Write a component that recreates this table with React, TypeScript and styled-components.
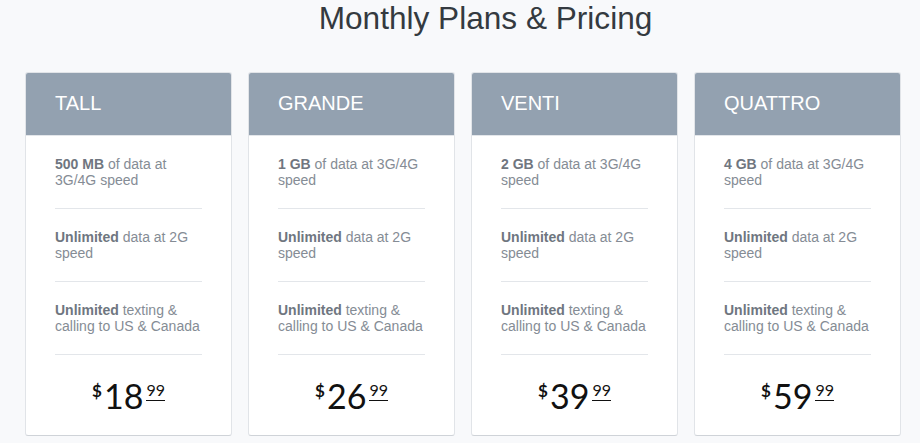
import React from "react";
import styled, { createGlobalStyle } from "styled-components";

type Plan = {
  name: string;
  data: string;
  dataTail: string;
  dollars: string;
  cents: string;
};

const plans: Plan[] = [
  { name: "TALL", data: "500 MB", dataTail: "of data at 3G/4G speed", dollars: "18", cents: "99" },
  { name: "GRANDE", data: "1 GB", dataTail: "of data at 3G/4G speed", dollars: "26", cents: "99" },
  { name: "VENTI", data: "2 GB", dataTail: "of data at 3G/4G speed", dollars: "39", cents: "99" },
  { name: "QUATTRO", data: "4 GB", dataTail: "of data at 3G/4G speed", dollars: "59", cents: "99" },
];

const GlobalStyle = createGlobalStyle`
  html, body {
    margin: 0;
    padding: 0;
    background: #f8f9fb;
    font-family: "Liberation Sans", Arial, sans-serif;
  }
`;

export default function App() {
  return (
    <>
      <GlobalStyle />
      <Page>
        <Title>Monthly Plans &amp; Pricing</Title>
        <Grid>
          {plans.map((p) => (
            <Card key={p.name}>
              <CardHeader>{p.name}</CardHeader>
              <Features>
                <Feature>
                  <strong>{p.data}</strong> {p.dataTail}
                </Feature>
                <Feature>
                  <strong>Unlimited</strong> data at 2G speed
                </Feature>
                <Feature>
                  <strong>Unlimited</strong> texting &amp; calling to US &amp; Canada
                </Feature>
              </Features>
              <Price>
                <Currency>$</Currency>
                <Dollars>{p.dollars}</Dollars>
                <Cents>{p.cents}</Cents>
              </Price>
            </Card>
          ))}
        </Grid>
      </Page>
    </>
  );
}

const Page = styled.div`
  padding: 0 18px 0 25px;
`;

const Title = styled.h1`
  margin: 0;
  padding-left: 44px;
  font-size: 31.6px;
  line-height: 36px;
  font-weight: normal;
  color: #343a40;
  text-align: center;
`;

const Grid = styled.div`
  display: grid;
  grid-template-columns: repeat(4, 207px);
  gap: 16px;
  margin-top: 36px;
`;

const Card = styled.div`
  background: #fff;
  border: 1px solid #e1e4e8;
  border-bottom-color: #cfd3d8;
  border-radius: 3px;
  overflow: hidden;
  box-sizing: border-box;
`;

const CardHeader = styled.div`
  height: 60px;
  display: flex;
  align-items: center;
  padding: 0 0 2px 29px;
  background: #93a1b0;
  border-bottom: 1px solid #e3e6ea;
  color: #fff;
  font-size: 20px;
`;

const Features = styled.ul`
  list-style: none;
  margin: 0;
  padding: 0 29px;
`;

const Feature = styled.li`
  padding: 20px 0;
  border-bottom: 1px solid #e3e6ea;
  font-size: 14px;
  line-height: 16px;
  color: #858c95;

  strong {
    color: #6f7680;
  }
`;

const Price = styled.div`
  display: flex;
  justify-content: center;
  align-items: flex-start;
  padding: 24px 0 22px;
  font-family: Lato, "Liberation Sans", sans-serif;
  color: #111;
`;

const Currency = styled.span`
  font-size: 17px;
  font-weight: bold;
  line-height: 17px;
  margin-top: 3px;
  margin-right: 2px;
`;

const Dollars = styled.span`
  font-size: 34px;
  line-height: 34px;
`;

const Cents = styled.span`
  font-size: 16px;
  line-height: 16px;
  margin-left: 3px;
  margin-top: 3px;
  padding-bottom: 2px;
  border-bottom: 1px solid #111;
`;
